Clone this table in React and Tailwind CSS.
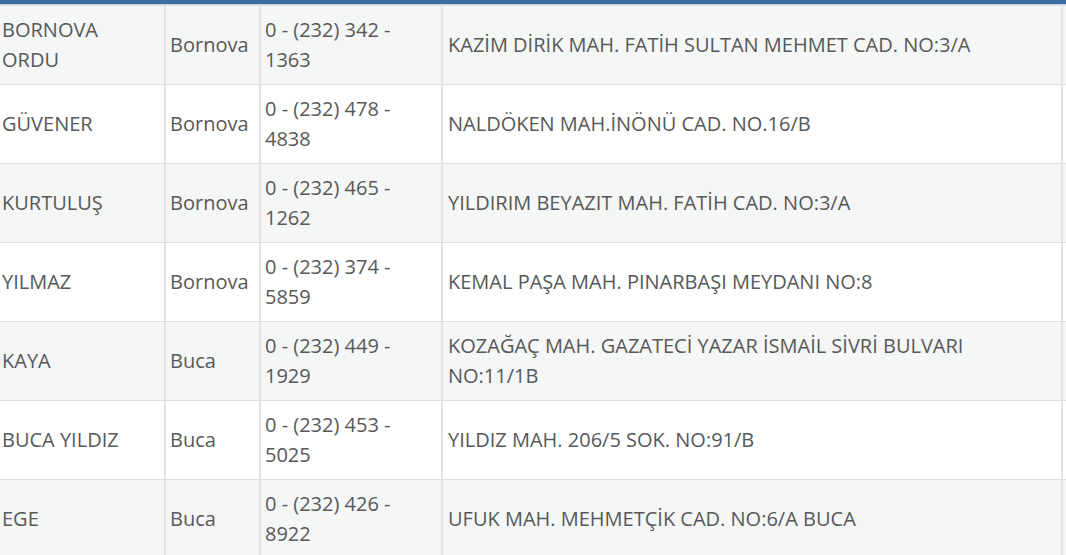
const rows = [
  ["BORNOVA|ORDU", "Bornova", "0 - (232) 342 -|1363", "KAZİM DİRİK MAH. FATİH SULTAN MEHMET CAD. NO:3/A"],
  ["GÜVENER", "Bornova", "0 - (232) 478 -|4838", "NALDÖKEN MAH.İNÖNÜ CAD. NO.16/B"],
  ["KURTULUŞ", "Bornova", "0 - (232) 465 -|1262", "YILDIRIM BEYAZIT MAH. FATİH CAD. NO:3/A"],
  ["YILMAZ", "Bornova", "0 - (232) 374 -|5859", "KEMAL PAŞA MAH. PINARBAŞI MEYDANI NO:8"],
  ["KAYA", "Buca", "0 - (232) 449 -|1929", "KOZAĞAÇ MAH. GAZATECİ YAZAR İSMAİL SİVRİ BULVARI|NO:11/1B"],
  ["BUCA YILDIZ", "Buca", "0 - (232) 453 -|5025", "YILDIZ MAH. 206/5 SOK. NO:91/B"],
  ["EGE", "Buca", "0 - (232) 426 -|8922", "UFUK MAH. MEHMETÇİK CAD. NO:6/A BUCA"],
];

function Lines({ text }) {
  const parts = text.split("|");
  return (
    <>
      {parts.map((p, i) => (
        <div key={i}>{p}</div>
      ))}
    </>
  );
}

export default function App() {
  return (
    <div
      className="w-[1066px] h-[555px] overflow-hidden bg-white text-[#585858]"
      style={{ fontFamily: '"Open Sans", "Noto Sans", sans-serif' }}
    >
      <div className="h-[4px] bg-[#3f6fa2]" />
      <div className="h-[2px] bg-gradient-to-b from-[#b9c8d8] to-[#eef1f3]" />
      <div className="flex flex-col">
        {rows.map((r, i) => (
          <div
            key={i}
            className={`flex h-[79px] border-b border-[#dedede] text-[20px] leading-[30px] ${
              i % 2 === 0 ? "bg-[#f5f6f6]" : "bg-white"
            }`}
          >
            <div className="w-[164px] shrink-0 pl-[2px] flex flex-col justify-center">
              <Lines text={r[0]} />
            </div>
            <div className="w-[95px] shrink-0 pl-[4px] border-l-2 border-[#e3e3e3] flex flex-col justify-center">
              <Lines text={r[1]} />
            </div>
            <div className="w-[182px] shrink-0 pl-[4px] border-l-2 border-[#e3e3e3] flex flex-col justify-center">
              <Lines text={r[2]} />
            </div>
            <div className="w-[620px] shrink-0 pl-[5px] border-l-2 border-[#e3e3e3] flex flex-col justify-center whitespace-nowrap">
              <Lines text={r[3]} />
            </div>
            <div className="flex-1 border-l-2 border-[#e3e3e3]" />
          </div>
        ))}
      </div>
    </div>
  );
}
